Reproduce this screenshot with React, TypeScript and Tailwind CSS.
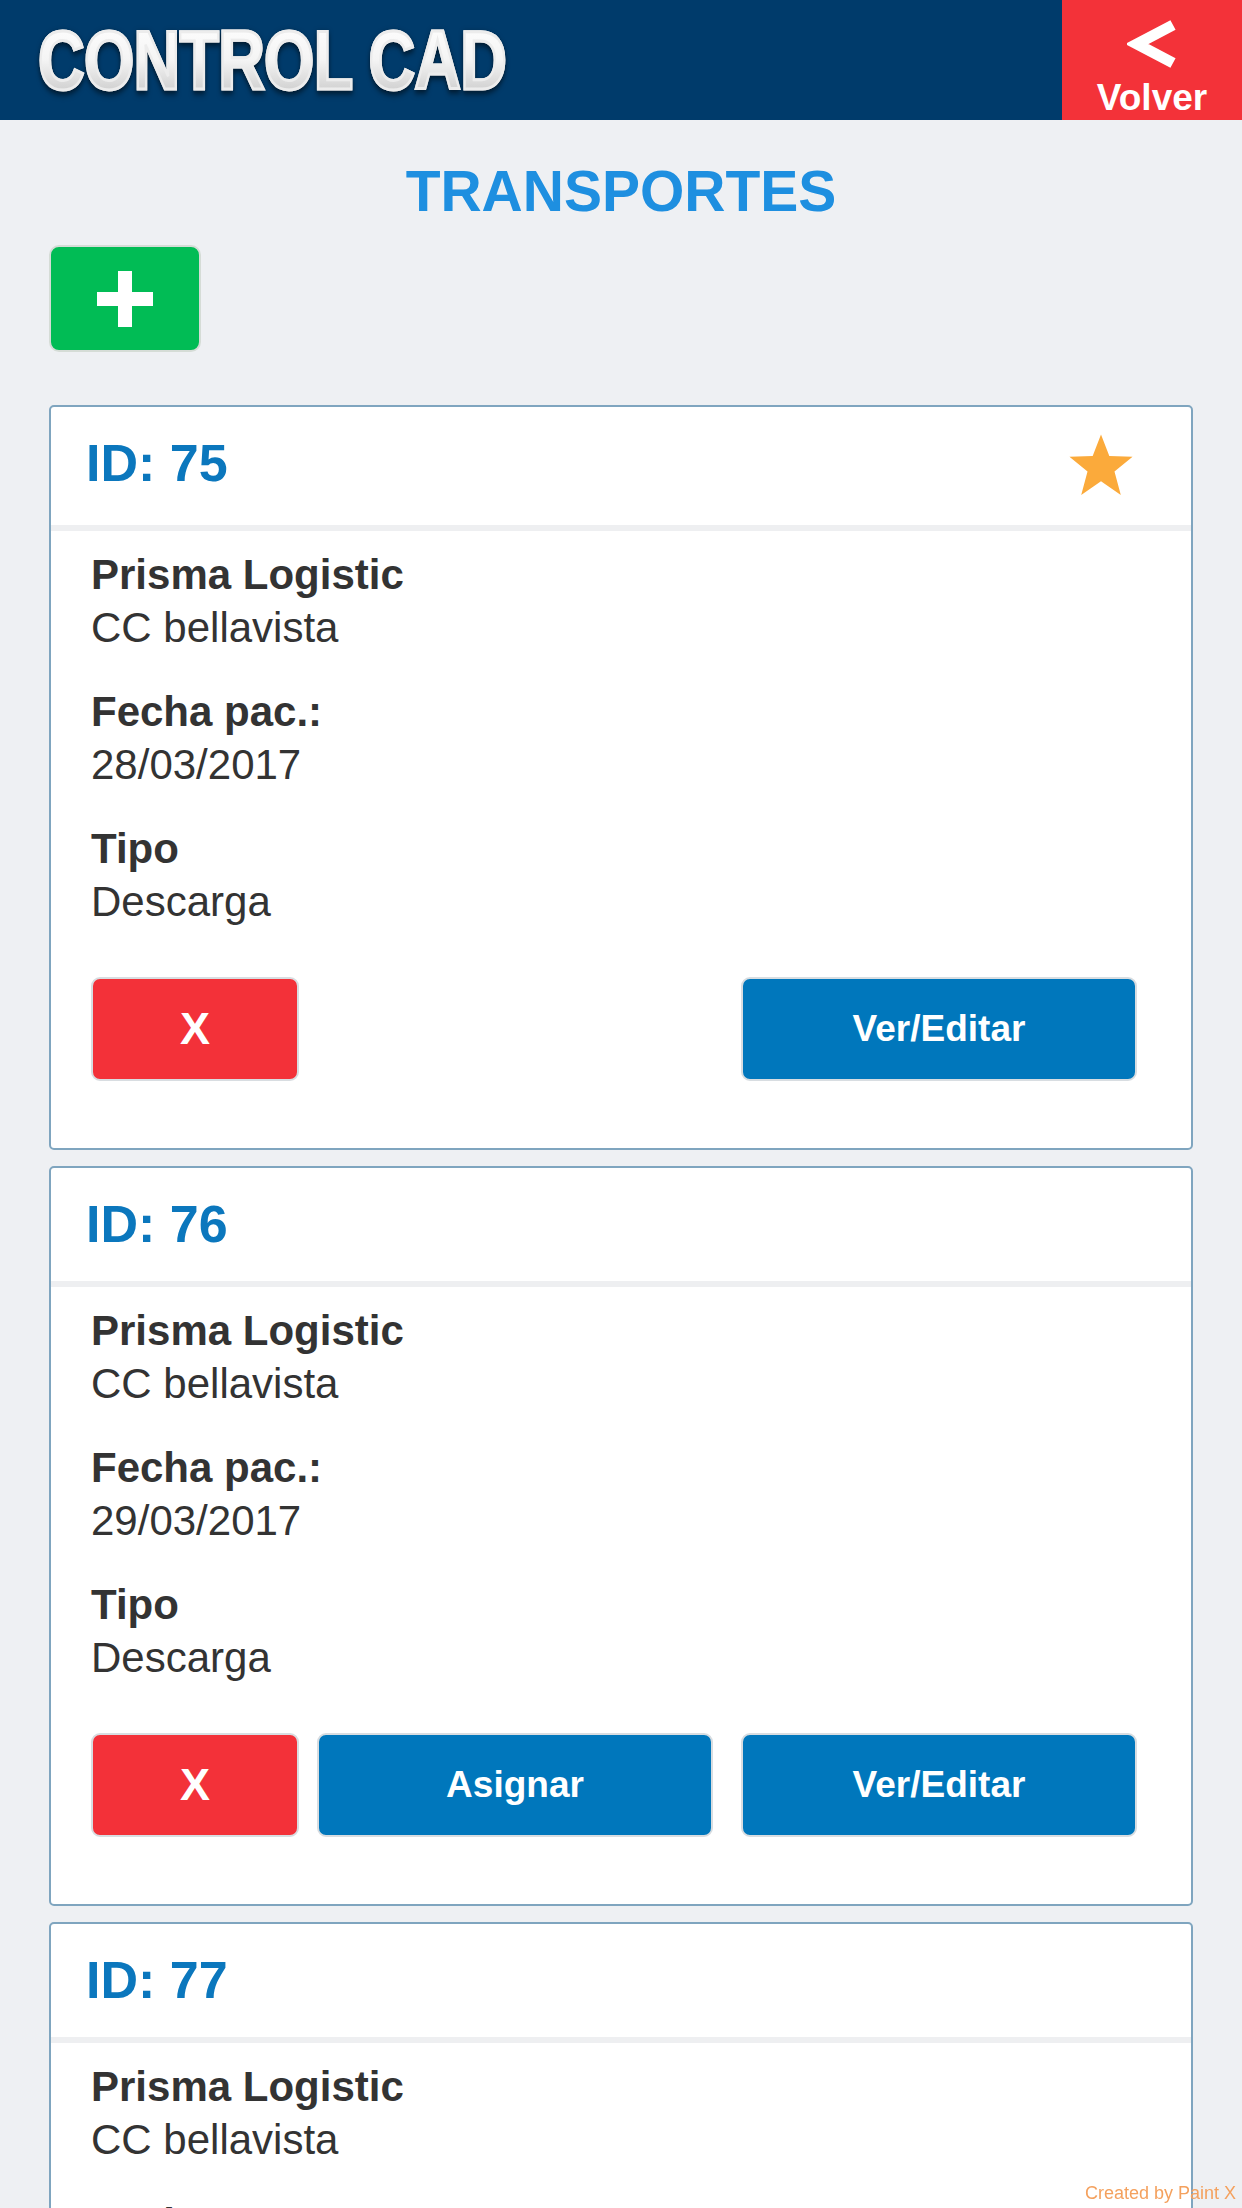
import type { ReactNode } from "react";

type Transporte = {
  id: number;
  empresa: string;
  lugar: string;
  fecha: string;
  tipo: string;
  favorito?: boolean;
  asignar?: boolean;
};

const TRANSPORTES: Transporte[] = [
  { id: 75, empresa: "Prisma Logistic", lugar: "CC bellavista", fecha: "28/03/2017", tipo: "Descarga", favorito: true },
  { id: 76, empresa: "Prisma Logistic", lugar: "CC bellavista", fecha: "29/03/2017", tipo: "Descarga", asignar: true },
  { id: 77, empresa: "Prisma Logistic", lugar: "CC bellavista", fecha: "30/03/2017", tipo: "Descarga", asignar: true },
];

function Star() {
  return (
    <svg viewBox="0 0 24 23" className="-mt-[1px] mr-[55px] h-[66px] w-[70px]" aria-hidden>
      <polygon
        fill="#fbaa3b"
        points="12,0.5 14.9,8 23,8.3 16.7,13.4 18.9,21.6 12,16.8 5.1,21.6 7.3,13.4 1,8.3 9.1,8"
      />
    </svg>
  );
}

function Field({ label, value }: { label: string; value: string }) {
  return (
    <div className="flex flex-col text-[42px] leading-[53px] text-[#333333]">
      <span className="font-bold">{label}</span>
      <span>{value}</span>
    </div>
  );
}

function Btn({
  children,
  color,
  className,
}: {
  children: ReactNode;
  color: "red" | "blue";
  className?: string;
}) {
  return (
    <button
      type="button"
      className={`${className ?? ""} flex h-[104px] items-center justify-center rounded-[9px] border-2 border-[#d8dde1] font-bold text-white ${
        color === "red" ? "bg-[#f33139]" : "bg-[#0077bc]"
      }`}
    >
      {children}
    </button>
  );
}

function TransporteCard({ t }: { t: Transporte }) {
  return (
    <div className="overflow-hidden rounded-[5px] border-2 border-[#7fa5bf] bg-white">
      <div
        className={`flex items-start justify-between pt-[27px] pl-[35px] ${
          t.favorito ? "h-[118px]" : "h-[113px]"
        }`}
      >
        <h2 className="text-[52px] font-bold leading-[58px] text-[#0b77bd]">ID: {t.id}</h2>
        {t.favorito ? <Star /> : null}
      </div>
      <div className="h-[6px] bg-[#eeeff1]" />
      <div className="flex flex-col px-[40px] pt-[17px] pb-[67px]">
        <div className="flex flex-col gap-[31px]">
          <Field label={t.empresa} value={t.lugar} />
          <Field label="Fecha pac.:" value={t.fecha} />
          <Field label="Tipo" value={t.tipo} />
        </div>
        <div className="mt-[49px] flex pr-[14px]">
          <Btn color="red" className="w-[208px] text-[45px]">
            X
          </Btn>
          {t.asignar ? (
            <Btn color="blue" className="ml-[18px] w-[396px] text-[37px]">
              Asignar
            </Btn>
          ) : null}
          <Btn color="blue" className="ml-auto w-[396px] text-[37px]">
            Ver/Editar
          </Btn>
        </div>
      </div>
    </div>
  );
}

export default function App() {
  return (
    <div className="min-h-screen bg-[#eef0f3] font-['Liberation_Sans',Arial,sans-serif]">
      <header className="flex h-[120px] items-stretch justify-between bg-[#003b6b]">
        <div className="flex items-center pl-[38px]">
          <h1 className="origin-left scale-x-[0.77] bg-gradient-to-b from-white via-[#f4f4f4] to-[#c4c4c4] bg-clip-text text-[84px] font-bold leading-none tracking-[-1px] text-transparent drop-shadow-[0_3px_3px_rgba(0,0,0,0.6)] [-webkit-text-stroke:3px_#ececec]">
            CONTROL CAD
          </h1>
        </div>
        <button
          type="button"
          className="flex w-[180px] flex-col items-center bg-[#f33239] text-white"
        >
          <svg viewBox="0 0 52 50" className="mt-[19px] ml-[2px] h-[50px] w-[52px]" aria-hidden>
            <polyline
              points="46,6 10,25 46,44"
              fill="none"
              stroke="#ffffff"
              strokeWidth="11"
              strokeLinejoin="miter"
            />
          </svg>
          <span className="mt-[10px] text-[37px] font-bold leading-[37px]">Volver</span>
        </button>
      </header>

      <main className="flex flex-col px-[49px]">
        <h1 className="mt-[38px] text-center text-[57px] font-bold leading-[66px] text-[#1e8fe0]">
          TRANSPORTES
        </h1>

        <div className="mt-[21px]">
          <button
            type="button"
            className="flex h-[107px] w-[152px] items-center justify-center rounded-[10px] border-2 border-[#d5dcd6] bg-[#01bc55]"
            aria-label="Nuevo transporte"
          >
            <svg viewBox="0 0 56 56" className="h-[56px] w-[56px]" aria-hidden>
              <rect x="21" y="0" width="14" height="56" fill="#ffffff" />
              <rect x="0" y="21" width="56" height="14" fill="#ffffff" />
            </svg>
          </button>
        </div>

        <div className="mt-[53px] flex flex-col gap-[16px] pb-[40px]">
          {TRANSPORTES.map((t) => (
            <TransporteCard key={t.id} t={t} />
          ))}
        </div>
      </main>

      <span className="fixed right-[6px] bottom-[6px] text-[18px] leading-none text-[#f4a15e]">
        Created by Paint X
      </span>
    </div>
  );
}
